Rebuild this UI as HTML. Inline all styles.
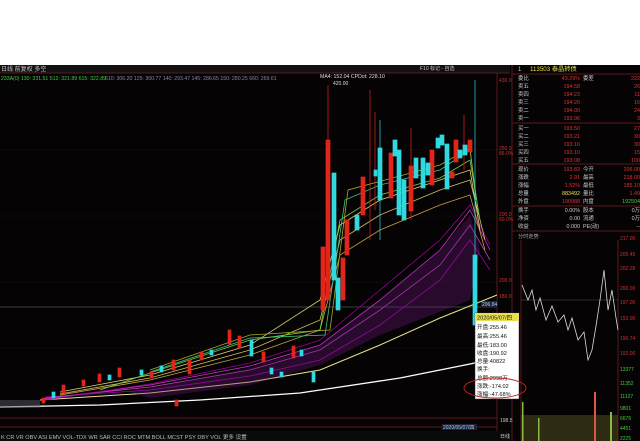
<!DOCTYPE html>
<html><head><meta charset="utf-8"><style>
html,body{margin:0;padding:0;width:640px;height:441px;overflow:hidden;background:#fff;font-family:"Liberation Sans","Noto Sans CJK SC",sans-serif}
#b{position:absolute;left:0;top:65px;width:640px;height:376px;background:#050304}
svg{position:absolute;left:0;top:0}
text{font-family:"Liberation Sans","Noto Sans CJK SC",sans-serif}
</style></head><body>
<div id="b"></div>
<svg width="640" height="441" viewBox="0 0 640 441">
<rect x="0" y="65" width="510" height="8" fill="#111"/>
<text x="1" y="71" font-size="6" fill="#ccc">日线 前复权 多空</text>
<line x1="0" y1="73" x2="510" y2="73" stroke="#5a1a1a" stroke-width="1"/>
<text x="1" y="80" font-size="5.2" fill="#4c4">233A(0) 130: 331.51 512: 321.89 615: 322.89</text>
<text x="105" y="80" font-size="5.2" fill="#88a">610: 306.20 125: 300.77 140: 293.47 145: 286.65 150: 280.25 660: 269.61</text>
<text x="320" y="78" font-size="5.2" fill="#ddd">MA4: 152.04 CPDot: 228.10</text>
<text x="333" y="85" font-size="5" fill="#ddd">420.00</text>
<text x="420" y="70" font-size="5" fill="#ccc">F10 标记 - 自选</text>
<g stroke="#3a0f0f" stroke-width="0.6" stroke-dasharray="2,2">
<line x1="0" y1="150" x2="497" y2="150"/><line x1="0" y1="216" x2="497" y2="216"/>
<line x1="0" y1="282" x2="497" y2="282"/><line x1="0" y1="348" x2="497" y2="348"/>
</g>
<line x1="0" y1="307" x2="497" y2="307" stroke="#777" stroke-width="0.6"/>
<line x1="0" y1="418" x2="497" y2="418" stroke="#5a1a1a"/>
<line x1="0" y1="427" x2="497" y2="427" stroke="#5a1a1a"/>
<line x1="497" y1="73" x2="497" y2="441" stroke="#5a1a1a"/>
<line x1="512" y1="65" x2="512" y2="441" stroke="#5a1a1a"/>
<g font-size="5" fill="#c33">
<text x="499" y="82">430.0</text><text x="499" y="150">250.0</text><text x="499" y="155">86.0%</text>
<text x="499" y="216">200.0</text><text x="499" y="221">60.0%</text><text x="499" y="282">200.0</text>
<text x="499" y="298">180.0</text>
</g>
<rect x="481" y="301" width="16" height="6" fill="#223"/><text x="482" y="306" font-size="5" fill="#9cf">206.84</text>
<g fill="none" stroke-width="0.8">
<polyline stroke="#fff" stroke-width="1.3" points="0,407 100,405 200,400 300,393 400,378 470,364 497,358"/>
<polyline stroke="#e8e090" stroke-width="1" points="40,400 150,393 250,382 320,370 380,345 440,318 497,295"/>
<polyline stroke="#a0a" points="45,397 150,390 250,376 320,360 380,325 440,280 470,240 490,270"/>
<polyline stroke="#b4b" points="45,398 150,387 250,370 320,350 380,310 440,265 470,225 490,260"/>
<polyline stroke="#c3c" points="45,399 150,385 250,366 320,345 380,300 440,250 470,210 490,250"/>
<polyline stroke="#909" points="45,400 150,384 250,363 320,340 380,290 440,240 470,205 490,245"/>
<polyline stroke="#c8a040" points="60,395 150,380 250,355 320,330 340,255 380,230 440,205 470,195 485,250"/>
<polyline stroke="#d0c060" points="60,394 150,378 250,350 320,320 340,240 380,215 440,190 470,180 485,240"/>
<polyline stroke="#e0d070" points="60,392 150,375 250,345 320,300 340,225 380,200 440,180 470,170 480,230"/>
<polyline stroke="#7c4" points="100,390 150,373 250,340 320,330 340,220 380,195 440,178 470,160 480,220"/>
<polyline stroke="#3c8" points="150,372 250,338 325,335 345,200 380,185 440,170 470,150 478,210"/>
<polyline stroke="#aa2" points="150,370 250,335 330,330 348,190 385,180 440,165 470,148 476,200"/>
</g>
<polygon points="130,392 250,368 320,345 380,300 440,250 470,215 480,250 470,300 380,335 320,365 250,385 150,398" fill="#6a1a7a" opacity="0.35"/>
<rect x="0" y="400" width="40" height="8" fill="#556" opacity="0.5"/>
<g>
<g fill="#e0251b" stroke="#e0251b" stroke-width="0.7">
<rect x="42" y="398" width="3" height="5"/><rect x="62" y="385" width="3" height="8"/><rect x="82" y="380" width="3" height="6"/>
<rect x="98" y="374" width="3" height="8"/><rect x="118" y="368" width="3" height="9"/><rect x="150" y="372" width="3" height="6"/>
<rect x="172" y="360" width="3" height="10"/><rect x="188" y="360" width="3" height="14"/><rect x="228" y="330" width="3" height="14"/>
<rect x="238" y="336" width="3" height="12"/><rect x="200" y="352" width="3" height="8"/><rect x="262" y="352" width="3" height="10"/>
<rect x="292" y="346" width="3" height="12"/><rect x="175" y="400" width="3" height="6"/>
<rect x="321" y="247" width="4" height="63"/><rect x="326" y="140" width="4" height="160"/><rect x="341" y="258" width="4" height="42"/>
<rect x="345" y="220" width="4" height="35"/><rect x="361" y="177" width="4" height="38"/><rect x="389" y="153" width="4" height="45"/>
<rect x="409" y="166" width="4" height="45"/><rect x="430" y="150" width="4" height="35"/><rect x="454" y="140" width="4" height="22"/>
<rect x="468" y="140" width="4" height="12"/><rect x="450" y="172" width="4" height="6"/>
<line x1="328" y1="85" x2="328" y2="300"/><line x1="370" y1="90" x2="370" y2="240"/><line x1="375" y1="112" x2="375" y2="210"/>
<line x1="411" y1="128" x2="411" y2="220"/><line x1="464" y1="115" x2="464" y2="170"/>
</g>
<g fill="#31d8e0" stroke="#31d8e0" stroke-width="0.7">
<rect x="52" y="392" width="3" height="6"/><rect x="108" y="375" width="3" height="5"/><rect x="140" y="370" width="3" height="5"/>
<rect x="160" y="366" width="3" height="6"/><rect x="210" y="350" width="3" height="5"/><rect x="250" y="340" width="3" height="16"/>
<rect x="270" y="368" width="3" height="6"/><rect x="280" y="372" width="3" height="5"/><rect x="300" y="350" width="3" height="6"/>
<rect x="312" y="372" width="3" height="10"/><rect x="332" y="173" width="4" height="107"/><rect x="336" y="278" width="4" height="32"/>
<rect x="355" y="215" width="4" height="15"/><rect x="378" y="148" width="4" height="52"/><rect x="374" y="170" width="3" height="6"/>
<rect x="393" y="140" width="4" height="16"/><rect x="397" y="150" width="4" height="65"/><rect x="402" y="180" width="4" height="40"/>
<rect x="414" y="158" width="4" height="20"/><rect x="421" y="158" width="4" height="30"/><rect x="426" y="163" width="4" height="12"/>
<rect x="436" y="138" width="4" height="10"/><rect x="440" y="135" width="4" height="10"/><rect x="445" y="144" width="4" height="45"/>
<rect x="458" y="150" width="4" height="8"/><rect x="463" y="145" width="4" height="10"/>
<rect x="473" y="255" width="4" height="70"/><line x1="475" y1="80" x2="475" y2="255"/><line x1="380" y1="120" x2="380" y2="240"/>
</g>
</g>
<text x="500" y="422" font-size="5" fill="#ccc">198.5</text>
<!-- bottom tabs -->
<rect x="0" y="431" width="510" height="10" fill="#0a0a0a"/>
<text x="1" y="439" font-size="5.6" fill="#bbb">K CR VR OBV ASI EMV VOL-TDX WR SAR CCI ROC MTM BOLL MCST PSY DBY VOL 更多 设置</text>
<!-- right panel -->
<text x="518" y="71" font-size="6" fill="#ccc">1</text>
<text x="530" y="71" font-size="6.2" fill="#e8e050">113503 泰晶转债</text>
<line x1="512" y1="74" x2="640" y2="74" stroke="#5a1a1a"/>
<g font-size="5.4">
<g fill="#ccc">
<text x="518" y="80">委比</text><text x="518" y="88">卖五</text><text x="518" y="96">卖四</text><text x="518" y="104">卖三</text><text x="518" y="112">卖二</text><text x="518" y="120">卖一</text>
<text x="518" y="130">买一</text><text x="518" y="138">买二</text><text x="518" y="146">买三</text><text x="518" y="154">买四</text><text x="518" y="162">买五</text>
<text x="518" y="171">现价</text><text x="518" y="179">涨跌</text><text x="518" y="187">涨幅</text><text x="518" y="195">总量</text><text x="518" y="203">外盘</text>
<text x="518" y="212">换手</text><text x="518" y="220">净资</text><text x="518" y="228">收益</text>
<text x="583" y="80">委差</text><text x="583" y="171">今开</text><text x="583" y="179">最高</text><text x="583" y="187">最低</text><text x="583" y="195">量比</text><text x="583" y="203">内盘</text>
<text x="583" y="212">股本</text><text x="583" y="220">流通</text><text x="583" y="228">PE(动)</text>
</g>
<g fill="#d33" text-anchor="end">
<text x="580" y="80">43.29%</text><text x="580" y="88">194.58</text><text x="580" y="96">194.23</text><text x="580" y="104">194.20</text><text x="580" y="112">194.00</text><text x="580" y="120">193.96</text>
<text x="580" y="130">193.50</text><text x="580" y="138">193.21</text><text x="580" y="146">193.16</text><text x="580" y="154">193.10</text><text x="580" y="162">193.08</text>
<text x="580" y="171">193.83</text><text x="580" y="179">2.91</text><text x="580" y="187">1.52%</text><text x="580" y="203">190988</text>
<text x="640" y="80">222</text><text x="640" y="88">26</text><text x="640" y="96">11</text><text x="640" y="104">16</text><text x="640" y="112">24</text><text x="640" y="120">3</text>
<text x="640" y="130">27</text><text x="640" y="138">30</text><text x="640" y="146">30</text><text x="640" y="154">15</text><text x="640" y="162">100</text>
<text x="640" y="171">206.00</text><text x="640" y="179">218.00</text><text x="640" y="187">185.10</text><text x="640" y="195">1.49</text>
</g>
<text x="580" y="195" fill="#e8e050" text-anchor="end">883492</text>
<text x="640" y="203" fill="#4c4" text-anchor="end">192504</text>
<g fill="#ccc" text-anchor="end"><text x="580" y="212">0.00%</text><text x="580" y="220">0.00</text><text x="580" y="228">0.000</text><text x="640" y="212">0万</text><text x="640" y="220">0万</text><text x="640" y="228">--</text></g>
</g>
<g stroke="#5a1a1a"><line x1="512" y1="123" x2="640" y2="123"/><line x1="512" y1="164" x2="640" y2="164"/><line x1="512" y1="206" x2="640" y2="206"/><line x1="512" y1="231" x2="640" y2="231"/></g>
<text x="518" y="238" font-size="5.2" fill="#aaa">分时走势</text>
<line x1="521" y1="240" x2="521" y2="441" stroke="#5a1a1a"/><line x1="618" y1="240" x2="618" y2="441" stroke="#5a1a1a"/>
<g font-size="5" fill="#c33"><text x="620" y="240">217.00</text><text x="620" y="256">205.45</text><text x="620" y="270">202.28</text><text x="620" y="290">200.00</text><text x="620" y="304">197.00</text><text x="620" y="320">193.00</text><text x="620" y="340">190.74</text><text x="620" y="355">192.00</text></g>
<g font-size="5" fill="#4c4"><text x="620" y="371">13377</text><text x="620" y="385">11352</text><text x="620" y="398">11127</text><text x="620" y="410">9801</text><text x="620" y="420">6676</text><text x="620" y="430">4451</text><text x="620" y="440">2225</text></g>
<line x1="521" y1="300" x2="618" y2="300" stroke="#555" stroke-width="0.5"/>
<polyline fill="none" stroke="#ddd" stroke-width="0.8" points="522,285 528,300 532,290 536,310 540,298 546,320 552,306 558,322 564,315 568,330 572,318 578,340 584,332 588,360 592,350 596,326 600,300 604,270 608,310 612,290 616,318 618,330"/>
<g fill="#8b4">
<rect x="521" y="415" width="97" height="26" fill="#552" opacity="0.5"/>
<rect x="522" y="402" width="1.5" height="39"/><rect x="538" y="418" width="1.5" height="23"/><rect x="594" y="392" width="2" height="49" fill="#d54"/><rect x="610" y="412" width="2" height="29"/>
</g>
<!-- tooltip -->
<rect x="475" y="313" width="44" height="86" fill="#fff" stroke="#333" stroke-width="0.5"/>
<rect x="475" y="313" width="44" height="8" fill="#e8e050"/>
<g font-size="5.6" fill="#111">
<text x="477" y="319.5">2020/05/07/四</text><text x="477" y="329">开盘:255.46</text><text x="477" y="338">最高:255.46</text>
<text x="477" y="347">最低:183.00</text><text x="477" y="355">收盘:190.92</text><text x="477" y="363">总量:40822</text>
<text x="477" y="371">换手:</text><text x="477" y="380">总额:2998万</text><text x="477" y="388">涨跌:-174.02</text><text x="477" y="396">涨幅:-47.68%</text>
</g>
<ellipse cx="495" cy="388" rx="31" ry="10" fill="none" stroke="#b22" stroke-width="1"/>
<rect x="442" y="424" width="35" height="6" fill="#223"/><text x="443" y="429" font-size="5" fill="#9cf">2020/05/07/四</text>
<text x="500" y="438" font-size="5" fill="#ccc">日线</text>
</svg>
</body></html>
